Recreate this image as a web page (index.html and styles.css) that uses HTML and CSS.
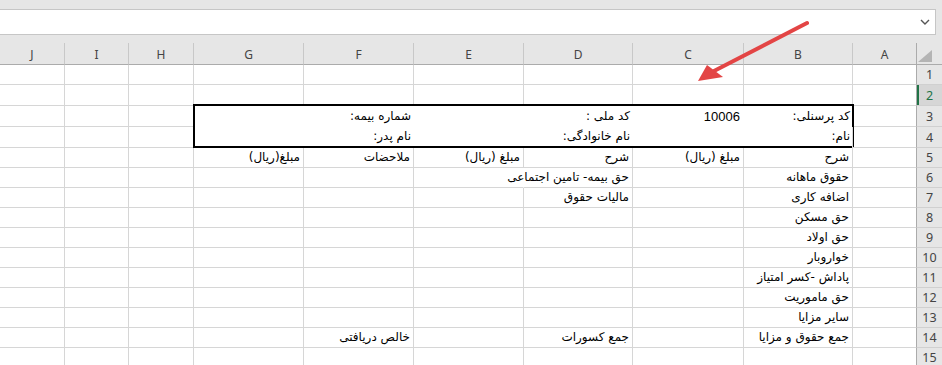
FILE: index.html
```html
<!DOCTYPE html>
<html lang="fa">
<head>
<meta charset="utf-8">
<title>Sheet</title>
<link rel="stylesheet" href="styles.css">
</head>
<body>
<div class="app">
  <div class="topband"></div>
  <div class="fbar">
    <svg class="chev" width="10" height="6" viewBox="0 0 10 6"><polyline points="1,1 5,5 9,1" fill="none" stroke="#555" stroke-width="1.4"/></svg>
  </div>
  <div class="gapband"></div>
  <div class="sheet">
    <div class="cols colhead">
      <div class="corner"><svg width="14" height="12" viewBox="0 0 14 12"><polygon points="14,0 14,12 0,12" fill="#b4b4b4"/></svg></div>
      <div class="ch">A</div><div class="ch">B</div><div class="ch">C</div><div class="ch">D</div><div class="ch">E</div><div class="ch">F</div><div class="ch">G</div><div class="ch">H</div><div class="ch">I</div><div class="ch">J</div>
    </div>
    <div class="cols r20">
      <div class="rh">1</div><div class="c"></div><div class="c"></div><div class="c"></div><div class="c"></div><div class="c"></div><div class="c"></div><div class="c"></div><div class="c"></div><div class="c"></div><div class="c"></div>
    </div>
    <div class="cols r21">
      <div class="rh sel">2</div><div class="c"></div><div class="c"></div><div class="c"></div><div class="c"></div><div class="c"></div><div class="c"></div><div class="c"></div><div class="c"></div><div class="c"></div><div class="c"></div>
    </div>
    <div class="cols dbl">
      <div class="rh">3</div><div class="c"></div>
      <div class="box">
        <div class="bc">کد پرسنلی:</div><div class="bc num">10006</div><div class="bc">کد ملی :</div><div class="bc"></div><div class="bc">شماره بیمه:</div><div class="bc"></div>
        <div class="bc">نام:</div><div class="bc"></div><div class="bc">نام خانوادگی:</div><div class="bc"></div><div class="bc">نام پدر:</div><div class="bc"></div>
      </div>
      <div class="c"></div><div class="c"></div><div class="c"></div>
      <div class="rh">4</div><div class="c"></div><div class="c"></div><div class="c"></div><div class="c"></div>
    </div>
    <div class="cols r20">
      <div class="rh">5</div><div class="c"></div><div class="c">شرح</div><div class="c">مبلغ (ریال)</div><div class="c">شرح</div><div class="c">مبلغ (ریال)</div><div class="c">ملاحضات</div><div class="c">مبلغ(ریال)</div><div class="c"></div><div class="c"></div><div class="c"></div>
    </div>
    <div class="cols r20">
      <div class="rh">6</div><div class="c"></div><div class="c">حقوق ماهانه</div><div class="c"></div><div class="c ovl">حق بیمه- تامین اجتماعی</div><div class="c"></div><div class="c"></div><div class="c"></div><div class="c"></div><div class="c"></div><div class="c"></div>
    </div>
    <div class="cols r20">
      <div class="rh">7</div><div class="c"></div><div class="c">اضافه کاری</div><div class="c"></div><div class="c">مالیات حقوق</div><div class="c"></div><div class="c"></div><div class="c"></div><div class="c"></div><div class="c"></div><div class="c"></div>
    </div>
    <div class="cols r20">
      <div class="rh">8</div><div class="c"></div><div class="c">حق مسکن</div><div class="c"></div><div class="c"></div><div class="c"></div><div class="c"></div><div class="c"></div><div class="c"></div><div class="c"></div><div class="c"></div>
    </div>
    <div class="cols r20">
      <div class="rh">9</div><div class="c"></div><div class="c">حق اولاد</div><div class="c"></div><div class="c"></div><div class="c"></div><div class="c"></div><div class="c"></div><div class="c"></div><div class="c"></div><div class="c"></div>
    </div>
    <div class="cols r20">
      <div class="rh">10</div><div class="c"></div><div class="c">خواروبار</div><div class="c"></div><div class="c"></div><div class="c"></div><div class="c"></div><div class="c"></div><div class="c"></div><div class="c"></div><div class="c"></div>
    </div>
    <div class="cols r20">
      <div class="rh">11</div><div class="c"></div><div class="c">پاداش -کسر امتیاز</div><div class="c"></div><div class="c"></div><div class="c"></div><div class="c"></div><div class="c"></div><div class="c"></div><div class="c"></div><div class="c"></div>
    </div>
    <div class="cols r20">
      <div class="rh">12</div><div class="c"></div><div class="c">حق ماموریت</div><div class="c"></div><div class="c"></div><div class="c"></div><div class="c"></div><div class="c"></div><div class="c"></div><div class="c"></div><div class="c"></div>
    </div>
    <div class="cols r20">
      <div class="rh">13</div><div class="c"></div><div class="c">سایر مزایا</div><div class="c"></div><div class="c"></div><div class="c"></div><div class="c"></div><div class="c"></div><div class="c"></div><div class="c"></div><div class="c"></div>
    </div>
    <div class="cols r20">
      <div class="rh">14</div><div class="c"></div><div class="c">جمع حقوق و مزایا</div><div class="c"></div><div class="c">جمع کسورات</div><div class="c"></div><div class="c">خالص دریافتی</div><div class="c"></div><div class="c"></div><div class="c"></div><div class="c"></div>
    </div>
    <div class="cols r20">
      <div class="rh">15</div><div class="c"></div><div class="c"></div><div class="c"></div><div class="c"></div><div class="c"></div><div class="c"></div><div class="c"></div><div class="c"></div><div class="c"></div><div class="c"></div>
    </div>
  </div>
  <svg class="arrow" width="942" height="365" viewBox="0 0 942 365">
    <line x1="807" y1="23" x2="714" y2="71" stroke="#e34545" stroke-width="4" stroke-linecap="round"/>
    <polygon points="698,81 707,65 723,77" fill="#e34545"/>
  </svg>
</div>
</body>
</html>
```
FILE: styles.css
```css
* { box-sizing: border-box; margin: 0; padding: 0; }
html, body { width: 942px; height: 365px; overflow: hidden; }
body { background: #e6e6e6; font-family: "DejaVu Sans", sans-serif; }
.app { position: relative; width: 942px; height: 365px; overflow: hidden; }
.topband { height: 9px; }
.fbar {
  height: 26px;
  margin-right: 6px;
  background: #fff;
  border: 1px solid #c6c6c6;
  border-left: 0;
  display: flex;
  align-items: center;
  justify-content: flex-end;
  padding-right: 5px;
}
.chev { display: block; }
.gapband { height: 8px; }
.sheet { direction: rtl; background: #fff; margin-left: -1px; }
.cols {
  display: grid;
  grid-template-columns: 26px 64px 109px 111px 109px 110px 110px 110px 65px 64px 65px;
}
.colhead { height: 22px; background: #e6e6e6; }
.corner {
  border-left: 1px solid #ababab;
  border-bottom: 1px solid #ababab;
  display: flex;
  align-items: flex-end;
  justify-content: flex-start;
  padding: 0 10px 2px 0;
}
.corner svg { display: block; }
.ch {
  border-left: 1px solid #c8c8c8;
  border-bottom: 1px solid #ababab;
  display: flex;
  align-items: center;
  justify-content: center;
  font: 12px "Noto Sans", sans-serif;
  color: #444;
  padding-top: 2px;
}
.r20 { height: 20px; }
.r21 { height: 21px; }
.dbl { grid-template-rows: 21px 21px; }
.rh {
  background: #e6e6e6;
  border-left: 1px solid #ababab;
  border-bottom: 1px solid #d0d0d0;
  display: flex;
  align-items: center;
  justify-content: center;
  font: 12.5px "Noto Sans", sans-serif;
  color: #444;
}
.rh.sel { background: #d6d6d6; color: #217346; box-shadow: inset 2px 0 0 #217346; }
.c {
  border-left: 1px solid #d6d6d6;
  border-bottom: 1px solid #d6d6d6;
  display: flex;
  align-items: flex-end;
  padding: 0 3px 2px;
  white-space: nowrap;
  font-size: 12px;
  line-height: 15px;
  color: #000;
}
.c.ovl { border-left-color: transparent; }
.box {
  grid-column: 3 / 9;
  grid-row: 1 / 3;
  margin: -2px -2px 0 0;
  border: 2px solid #000;
  background: #fff;
  display: grid;
  grid-template-columns: 109px 111px 109px 110px 110px 108px;
  grid-template-rows: 20px 20px;
}
.bc {
  display: flex;
  align-items: flex-end;
  padding: 0 2px 2px;
  white-space: nowrap;
  font-size: 12px;
  line-height: 15px;
  color: #000;
}
.bc.num { font: 13px "Liberation Sans", sans-serif; padding-right: 3px; }
.arrow { position: absolute; left: 0; top: 0; pointer-events: none; }
```
